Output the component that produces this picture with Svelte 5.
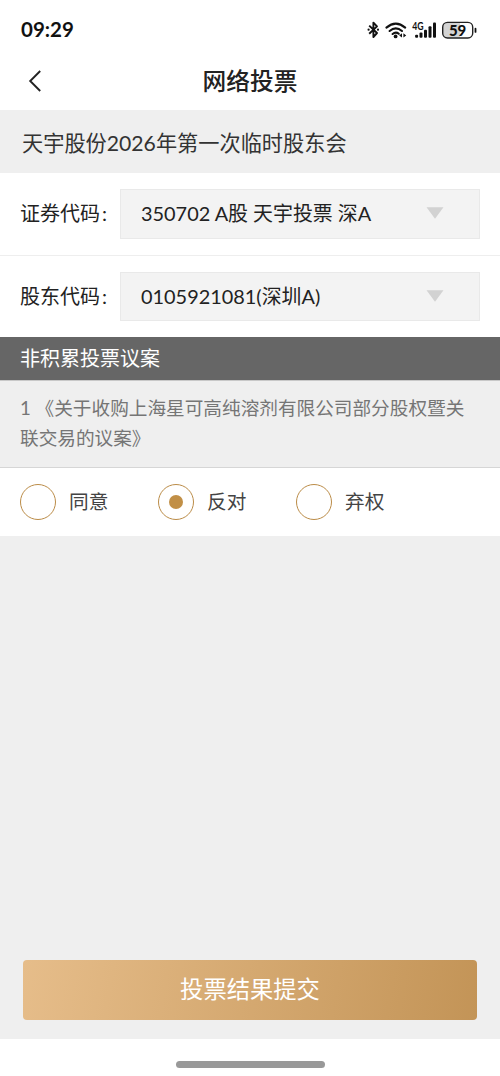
<script lang="ts">
	const fields = [
		{ label: '证券代码', value: '350702 A股 天宇投票 深A' },
		{ label: '股东代码', value: '0105921081(深圳A)' }
	];

	const options = ['同意', '反对', '弃权'];

	let selected = $state('反对');
</script>

<div class="screen">
	<div class="statusBar">
		<span class="time">09:29</span>
		<svg class="statusIcons" width="112" height="24" viewBox="0 0 112 24">
			<!-- bluetooth -->
			<path
				d="M3.2 7.6 L11 15 L7.4 19 V4.6 L11 8.4 L3.2 15.8"
				fill="none"
				stroke="#111"
				stroke-width="1.9"
				stroke-linejoin="round"
			/>
			<circle cx="2.6" cy="11.7" r="1.1" fill="#111" />
			<circle cx="12" cy="11.7" r="1.1" fill="#111" />
			<!-- wifi -->
			<g fill="none" stroke="#111" stroke-width="2.1" stroke-linecap="round">
				<path d="M20.4 9.6 Q29.8 1.6 39.2 9.6" />
				<path d="M23.6 13 Q29.8 7.6 36 13" />
				<path d="M26.6 16 Q29.8 13.4 32.8 15.8" />
			</g>
			<circle cx="29.6" cy="18.4" r="1.9" fill="#111" />
			<path d="M36 15.2 V19.6 L33.2 17.4Z M37.4 15.2 V19.6 L40.2 17.4Z" fill="#111" />
			<!-- mobile signal -->
			<text x="46.2" y="11.8" textLength="11.4" lengthAdjust="spacingAndGlyphs" class="network">4G</text>
			<g fill="#111">
				<rect x="49.1" y="16.8" width="3" height="3" rx="1" />
				<rect x="53.5" y="14.6" width="3" height="5.2" rx="1" />
				<rect x="58" y="11.8" width="3" height="8" rx="1" />
				<rect x="62.5" y="8.2" width="3" height="11.6" rx="1" />
				<rect x="67" y="4.4" width="3" height="15.4" rx="1" />
			</g>
			<!-- battery -->
			<rect x="76.7" y="4.4" width="30" height="15.6" rx="4.8" fill="#fff" />
			<path d="M81 4.4 H94 V20 H81 Q76.7 20 76.7 15.4 V9 Q76.7 4.4 81 4.4Z" fill="#d4d4d4" />
			<rect
				x="76.7"
				y="4.4"
				width="30"
				height="15.6"
				rx="4.8"
				fill="none"
				stroke="#222"
				stroke-width="1.4"
			/>
			<rect x="108.6" y="9.8" width="1.8" height="5" rx="0.9" fill="#111" />
			<text x="91.6" y="17.6" text-anchor="middle" class="charge">59</text>
		</svg>
	</div>

	<header>
		<button class="back" aria-label="返回">
			<svg width="14" height="22" viewBox="0 0 14 22">
				<path d="M12.2 1 L2.2 11 L12.2 21" fill="none" stroke="#222" stroke-width="1.9" />
			</svg>
		</button>
		<h1>网络投票</h1>
	</header>

	<div class="meeting">天宇股份2026年第一次临时股东会</div>

	{#each fields as field}
		<div class="field">
			<span class="label">{field.label}<i>:</i></span>
			<div class="select">
				<span>{field.value}</span>
				<svg width="18" height="12" viewBox="0 0 18 12">
					<path d="M0.5 0.3 H17.5 L9 11.7Z" fill="#d2d2d2" />
				</svg>
			</div>
		</div>
	{/each}

	<h2>非积累投票议案</h2>
	<p class="proposal">1 《关于收购上海星可高纯溶剂有限公司部分股权暨关<br />联交易的议案》</p>

	<div class="options">
		{#each options as option}
			<button class="option" onclick={() => (selected = option)}>
				<span class="radio" class:checked={selected === option}></span>
				<span class="optionText">{option}</span>
			</button>
		{/each}
	</div>

	<div class="footer">
		<button class="submit">投票结果提交</button>
	</div>

	<div class="homeArea">
		<div class="homeBar"></div>
	</div>
</div>

<style>
	:global(body) {
		margin: 0;
		background: #fff;
	}
	.screen {
		width: 500px;
		height: 1076px;
		display: flex;
		flex-direction: column;
		background: #efefef;
		font-family: Lato, 'Noto Sans CJK SC', sans-serif;
		color: #222;
		overflow: hidden;
		white-space: nowrap;
	}
	button {
		border: 0;
		padding: 0;
		background: none;
		font: inherit;
		color: inherit;
	}
	.statusBar {
		height: 60px;
		flex: none;
		box-sizing: border-box;
		padding: 0 22px 0 21px;
		display: flex;
		justify-content: space-between;
		align-items: center;
		background: #fff;
	}
	.time {
		padding-bottom: 2px;
		font-size: 20.5px;
		font-weight: 700;
		color: #111;
	}
	.network {
		font: 700 11.5px Lato, sans-serif;
		fill: #111;
	}
	.charge {
		font: 900 15px Lato, sans-serif;
		fill: #111;
	}
	header {
		height: 50px;
		flex: none;
		box-sizing: border-box;
		padding: 0 28px 8px;
		display: grid;
		grid-template-columns: 14px 1fr 14px;
		align-items: center;
		background: #fff;
	}
	.back {
		display: flex;
	}
	h1 {
		margin: 0;
		text-align: center;
		font-size: 23.7px;
		line-height: 36px;
		font-weight: 500;
	}
	.meeting {
		height: 63px;
		flex: none;
		padding: 2px 22px 0;
		box-sizing: border-box;
		font-size: 21.2px;
		line-height: 62px;
		color: #333;
	}
	.field {
		height: 82px;
		flex: none;
		box-sizing: border-box;
		padding: 0 20px;
		display: flex;
		align-items: center;
		background: #fff;
		font-size: 20px;
	}
	.field + .field {
		border-top: 1px solid #eee;
	}
	.label {
		width: 100px;
		padding-bottom: 3px;
	}
	.label i {
		font-style: normal;
		margin-left: 2px;
	}
	.select {
		flex: 1;
		height: 50px;
		box-sizing: border-box;
		padding: 0 35px 2px 20px;
		border: 1px solid #e9e9e9;
		display: flex;
		align-items: center;
		justify-content: space-between;
		background: #f3f3f3;
	}
	.field + .field .select {
		height: 49px;
	}
	.select span {
		padding-bottom: 1px;
		font-size: 19.9px;
	}
	h2 {
		margin: 0;
		height: 43px;
		flex: none;
		padding-left: 20px;
		background: #666;
		color: #fff;
		font-size: 20px;
		font-weight: 400;
		line-height: 42px;
	}
	.proposal {
		margin: 0;
		height: 88px;
		flex: none;
		box-sizing: border-box;
		padding: 12px 20px 0;
		border-top: 1px solid #c8c8c8;
		border-bottom: 1px solid #d6d6d6;
		font-size: 18.65px;
		line-height: 30px;
		color: #757575;
	}
	.options {
		height: 68px;
		flex: none;
		padding-left: 20px;
		display: flex;
		align-items: center;
		background: #fff;
	}
	.option {
		width: 138px;
		display: flex;
		align-items: center;
		gap: 13px;
		font-size: 19.7px;
		color: #444;
	}
	.optionText {
		padding-bottom: 3px;
	}
	.radio {
		width: 36px;
		height: 36px;
		box-sizing: border-box;
		border: 1.4px solid #bb8c48;
		border-radius: 50%;
		display: flex;
		align-items: center;
		justify-content: center;
	}
	.radio.checked::after {
		content: '';
		width: 14px;
		height: 14px;
		border-radius: 50%;
		background: #c18f46;
	}
	.footer {
		flex: 1;
		display: flex;
		align-items: flex-end;
		padding: 0 23px 19px;
	}
	.submit {
		flex: 1;
		height: 60px;
		box-sizing: border-box;
		padding-bottom: 4px;
		border-radius: 4px;
		background: linear-gradient(100deg, #e6bd8a, #c39457);
		color: #fff;
		font-size: 23.3px;
	}
	.homeArea {
		height: 37px;
		flex: none;
		display: flex;
		justify-content: center;
		align-items: flex-end;
		background: #fff;
	}
	.homeBar {
		width: 149px;
		height: 7px;
		margin-bottom: 8px;
		border-radius: 4px;
		background: #999;
	}
</style>
